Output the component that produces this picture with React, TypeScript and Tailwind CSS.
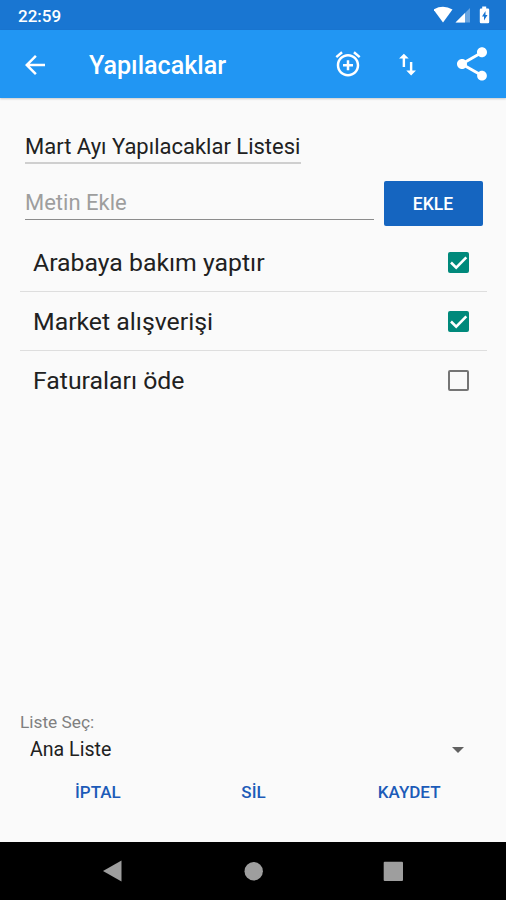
const todos = [
  { text: 'Arabaya bakım yaptır', done: true },
  { text: 'Market alışverişi', done: true },
  { text: 'Faturaları öde', done: false },
];

function Icon({ d, className }: { d: string; className: string }) {
  return (
    <svg className={`shrink-0 ${className}`} viewBox="0 0 24 24" fill="currentColor">
      <path d={d} />
    </svg>
  );
}

function StatusBar() {
  return (
    <div className="h-[30px] shrink-0 bg-[#1976d2] pl-[18px] flex items-center text-white">
      <span className="text-[17px] leading-[30px] font-medium pt-px">22:59</span>
      <svg className="ml-auto w-[72px] h-[30px]" viewBox="434 0 72 30" fill="currentColor">
        <path d="M433.5 9.5Q443 4 452.500 9.500L443 22.500Z" />
        <path d="M470 8V22.500H455.500Z" opacity=".35" />
        <path d="M465 13V22.500H455.500Z" />
        <path d="M481 8.500h1.200V6.500h4v2H488a1.200 1.200 0 0 1 1.200 1.200V22a1.200 1.200 0 0 1-1.200 1.200h-7a1.200 1.200 0 0 1-1.200-1.200V9.700A1.200 1.200 0 0 1 481 8.500Z" />
        <path d="M485.500 11l-3.500 5.500h2v4l3.500-5.500h-2z" fill="#1976d2" />
      </svg>
    </div>
  );
}

function Toolbar() {
  return (
    <div className="h-[68px] shrink-0 bg-[#2196f3] flex items-center pl-5 pr-[14px] text-white shadow-[0_1px_2px_rgba(0,0,0,0.2)]">
      <Icon className="size-[30px] mt-px" d="M20 11H7.83l5.59-5.59L12 4l-8 8 8 8 1.41-1.41L7.83 13H20v-2z" />
      <h1 className="ml-[39px] text-[25.1px] font-medium leading-none pt-1">Yapılacaklar</h1>
      <div className="ml-auto flex items-center">
        <Icon
          className="size-[30px] mr-[30px]"
          d="M7.88 3.39L6.6 1.86 2 5.71l1.29 1.53 4.59-3.85zM22 5.72l-4.6-3.86-1.29 1.53 4.6 3.86L22 5.72zM12 4c-4.97 0-9 4.03-9 9s4.02 9 9 9c4.97 0 9-4.03 9-9s-4.03-9-9-9zm0 16c-3.87 0-7-3.13-7-7s3.13-7 7-7 7 3.13 7 7-3.13 7-7 7zm1-11h-2v3H8v2h3v3h2v-3h3v-2h-3V9z"
        />
        <Icon
          className="size-[29px] mr-[30px]"
          d="M16 17.01V10h-2v7.01h-3L15 21l4-3.99h-3zM9 3L5 6.99h3V14h2V6.99h3L9 3z"
        />
        <Icon
          className="size-[40px]"
          d="M18 16.08c-.76 0-1.44.3-1.96.77L8.91 12.7c.05-.23.09-.46.09-.7s-.04-.47-.09-.7l7.05-4.11c.54.5 1.25.81 2.04.81 1.66 0 3-1.34 3-3s-1.34-3-3-3-3 1.34-3 3c0 .24.04.47.09.7L8.04 9.81C7.5 9.31 6.79 9 6 9c-1.66 0-3 1.34-3 3s1.34 3 3 3c.79 0 1.5-.31 2.04-.81l7.12 4.16c-.05.21-.08.43-.08.65 0 1.61 1.31 2.92 2.92 2.92s2.92-1.31 2.92-2.92-1.31-2.92-2.92-2.92z"
        />
      </div>
    </div>
  );
}

function Checkbox({ checked }: { checked: boolean }) {
  if (!checked) {
    return <div className="size-[21px] rounded-[2px] border-2 border-[#757575]" />;
  }
  return (
    <div className="size-[21px] rounded-[2px] bg-[#00897b]">
      <svg viewBox="0 0 21 21" fill="none" stroke="#fff" strokeWidth="2.6">
        <path d="M3 10.500L8.200 15.700L18.300 5.400" />
      </svg>
    </div>
  );
}

export default function App() {
  return (
    <div className="w-[506px] h-[900px] flex flex-col overflow-hidden bg-[#fafafa] font-[Roboto,sans-serif] text-[#212121]">
      <StatusBar />
      <Toolbar />

      <main className="flex-1 flex flex-col">
        <div className="ml-[25px] mt-[33px] w-[276px] h-[33px] border-b-2 border-[#cfcfcf] text-[22px] leading-[32px] whitespace-nowrap">
          Mart Ayı Yapılacaklar Listesi
        </div>
        <div className="flex pl-[25px] pr-[23px] mt-[17px]">
          <div className="w-[349px] h-[39px] border-b border-[#8c8c8c] text-[22px] leading-[43px] text-[#9e9e9e]">
            Metin Ekle
          </div>
          <button className="ml-auto w-[99px] h-[45px] rounded-[2px] bg-[#1565c0] pt-px pr-px text-white text-[17.5px] font-medium">
            EKLE
          </button>
        </div>

        <ul className="ml-5 mr-[19px] mt-[7px]">
          {todos.map((todo) => (
            <li
              key={todo.text}
              className="h-[59px] flex items-center justify-between pl-[13px] pr-[18px] border-b border-[#dedede] last:border-b-0"
            >
              <span className="text-[24.8px] pt-px">{todo.text}</span>
              <Checkbox checked={todo.done} />
            </li>
          ))}
        </ul>

        <div className="mt-auto">
          <p className="ml-5 text-[17.3px] leading-5 text-[#808080]">Liste Seç:</p>
          <div className="flex items-center justify-between ml-[30px] mr-[42px] mt-[6px]">
            <span className="text-[19.6px] leading-6">Ana Liste</span>
            <svg className="w-3 h-[6px]" viewBox="0 0 12 6" fill="#616161">
              <path d="M0 0h12L6 6z" />
            </svg>
          </div>
          <div className="grid grid-cols-3 pl-5 pr-[19px] mt-[18px] mb-[38px] text-center text-[17px] leading-6 font-medium text-[#1c5bb8]">
            <span>İPTAL</span>
            <span>SİL</span>
            <span>KAYDET</span>
          </div>
        </div>
      </main>

      <nav className="h-[58px] shrink-0 bg-black">
        <svg className="w-full h-[58px]" viewBox="0 842 506 58" fill="#9e9e9e">
          <path d="M103 871L121.500 860.500V881.500Z" />
          <circle cx="253.700" cy="871.300" r="9.200" />
          <rect x="383.700" y="861.700" width="19.300" height="19.300" rx="1" />
        </svg>
      </nav>
    </div>
  );
}
